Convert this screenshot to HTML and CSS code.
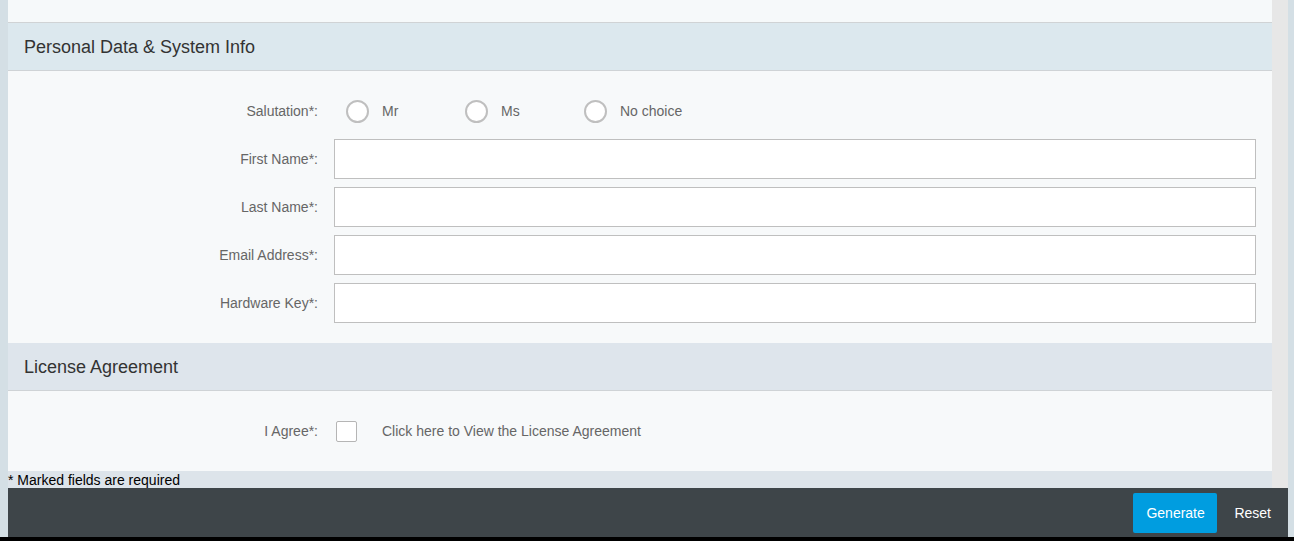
FILE: index.html
```html
<!DOCTYPE html>
<html>
<head>
<meta charset="utf-8">
<link rel="stylesheet" href="styles.css">
</head>
<body>
<div class="page">
  <div class="scrollarea">
    <div class="panel">
      <div class="prev"></div>
      <div class="sec-head first">Personal Data &amp; System Info</div>
      <div class="form">
        <div class="label">Salutation*:</div>
        <div class="radios">
          <label class="opt"><span class="radio"></span><span>Mr</span></label>
          <label class="opt"><span class="radio"></span><span>Ms</span></label>
          <label class="opt"><span class="radio"></span><span>No choice</span></label>
        </div>
        <div class="label">First Name*:</div>
        <div class="input"></div>
        <div class="label">Last Name*:</div>
        <div class="input"></div>
        <div class="label">Email Address*:</div>
        <div class="input"></div>
        <div class="label">Hardware Key*:</div>
        <div class="input"></div>
      </div>
      <div class="sec-head second">License Agreement</div>
      <div class="form lic">
        <div class="label">I Agree*:</div>
        <div class="agree"><span class="check"></span><span class="link">Click here to View the License Agreement</span></div>
      </div>
      <div class="note">* Marked fields are required</div>
    </div>
    <div class="scrollbar"></div>
  </div>
  <div class="footer">
    <button class="btn primary">Generate</button>
    <button class="btn plain">Reset</button>
  </div>
</div>
<div class="blackbar"></div>
</body>
</html>
```

FILE: styles.css
```css
html, body {
  margin: 0;
  padding: 0;
}
body {
  background: #d4dfe5;
  font-family: "Liberation Sans", Arial, sans-serif;
  font-size: 14px;
  width: 1294px;
  height: 541px;
  overflow: hidden;
}
.page {
  padding: 0 6px 0 8px;
}
.scrollarea {
  display: flex;
  height: 488px;
}
.panel {
  flex: 1;
  display: flex;
  flex-direction: column;
  background: #f7f9fa;
}
.scrollbar {
  width: 16px;
  background: #e7e7e7;
}
.prev {
  height: 22px;
  background: #f6f9fa;
}
.sec-head {
  height: 47px;
  line-height: 48px;
  padding-left: 16px;
  font-size: 18px;
  color: #333;
  border-bottom: 1px solid #cfd3d6;
}
.sec-head.first {
  background: #dce8ee;
  border-top: 1px solid #d0d3d5;
}
.sec-head.second {
  background: #dee5ec;
}
.form {
  display: grid;
  grid-template-columns: 310px 1fr;
  column-gap: 16px;
  row-gap: 8px;
  padding: 20px 16px 20px 0;
  grid-auto-rows: 40px;
}
.label {
  text-align: right;
  color: #666;
  line-height: 40px;
}
.input {
  background: #fff;
  border: 1px solid #bfbfbf;
  box-sizing: border-box;
}
.radios {
  display: flex;
  align-items: center;
  padding-left: 12px;
}
.opt {
  display: flex;
  align-items: center;
  width: 119px;
  color: #666;
}
.radio {
  width: 23px;
  height: 23px;
  box-sizing: border-box;
  border: 2px solid #bfbfbf;
  border-radius: 50%;
  background: #fff;
  margin-right: 13px;
}
.agree {
  display: flex;
  align-items: center;
  padding-left: 2px;
  color: #666;
}
.check {
  width: 21px;
  height: 21px;
  box-sizing: border-box;
  border: 1px solid #b5b5b5;
  border-radius: 2px;
  background: #fff;
  margin-right: 25px;
}
.note {
  height: 17px;
  line-height: 18px;
  background: #dde4ea;
  color: #000;
  font-size: 14px;
}
.footer {
  height: 49px;
  background: #3e4549;
  display: flex;
  justify-content: flex-end;
  align-items: center;
  padding-right: 1px;
}
.btn {
  font-family: "Liberation Sans", Arial, sans-serif;
  font-size: 14px;
  height: 40px;
  border: 0;
  color: #fff;
  cursor: pointer;
}
.primary {
  background: #009de0;
  border-radius: 2px;
  padding: 0 13px;
  width: 84px;
}
.plain {
  background: transparent;
  padding: 0 16px 0 17px;
}
.blackbar {
  height: 4px;
  background: #000;
}
```
